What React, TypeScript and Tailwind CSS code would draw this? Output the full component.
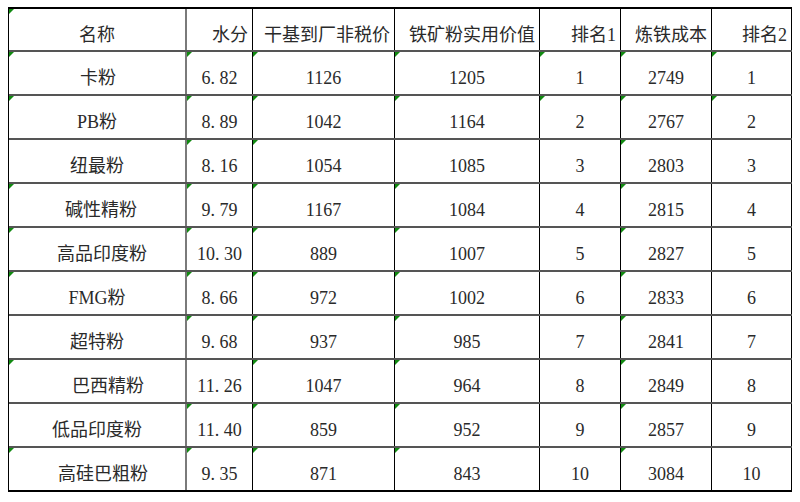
const cols = [
  'w-[178px] border-r-2 border-r-[#7a7a7a]',
  'w-[66px] border-r border-r-black',
  'w-[142px] border-r border-r-black',
  'w-[145px] border-r border-r-black',
  'w-[81px] border-r border-r-black',
  'w-[91px] border-r border-r-black',
  'w-[80px] border-r border-r-black',
];

const headers = ['名称', '水分', '干基到厂非税价', '铁矿粉实用价值', '排名1', '炼铁成本', '排名2'];

// name, offset, moisture, price, value, rank1, cost, rank2
const rows: [string, string, string, string, string, string, string, string][] = [
  ['卡粉', 'pl-[2px]', '6.82', '1126', '1205', '1', '2749', '1'],
  ['PB粉', '', '8.89', '1042', '1164', '2', '2767', '2'],
  ['纽最粉', '', '8.16', '1054', '1085', '3', '2803', '3'],
  ['碱性精粉', 'pl-[8px]', '9.79', '1167', '1084', '4', '2815', '4'],
  ['高品印度粉', 'pl-[10px]', '10.30', '889', '1007', '5', '2827', '5'],
  ['FMG粉', '', '8.66', '972', '1002', '6', '2833', '6'],
  ['超特粉', '', '9.68', '937', '985', '7', '2841', '7'],
  ['巴西精粉', 'pl-[22px]', '11.26', '1047', '964', '8', '2849', '8'],
  ['低品印度粉', '', '11.40', '859', '952', '9', '2857', '9'],
  ['高硅巴粗粉', 'pl-[12px]', '9.35', '871', '843', '10', '3084', '10'],
];

// which data cells carry the green corner mark, per row then column
const marks: number[][] = [
  [1, 1, 1, 1, 1, 1, 1],
  [1, 1, 1, 1, 1, 1, 1],
  [0, 1, 1, 0, 0, 1, 0],
  [1, 1, 1, 1, 0, 1, 0],
  [1, 1, 1, 1, 0, 1, 0],
  [1, 1, 1, 1, 0, 1, 0],
  [0, 1, 1, 1, 0, 1, 0],
  [1, 0, 1, 1, 0, 1, 0],
  [0, 1, 1, 1, 0, 1, 0],
  [1, 1, 1, 1, 0, 1, 0],
];

function Mark() {
  return (
    <span className="absolute left-0 top-0 h-0 w-0 border-t-[5px] border-r-[5px] border-t-[#118a11] border-r-transparent" />
  );
}

function Decimal({ v }: { v: string }) {
  const [a, b] = v.split('.');
  return (
    <span>
      {a}
      <span className="inline-block w-[9px]">.</span>
      {b}
    </span>
  );
}

export default function App() {
  return (
    <div
      className="min-h-screen bg-white text-[#2a2a2a] text-[18px]"
      style={{ fontFamily: '"Liberation Serif", "Noto Sans CJK SC", serif' }}
    >
      <div className="pt-[7px] pl-[8px]">
        <div className="inline-flex flex-col border-t-2 border-l border-black">
          <div className="flex h-[43px] border-b-2 border-b-[#555]">
            {headers.map((h, i) => (
              <div
                key={h}
                className={`${cols[i]} relative flex items-center pt-[11px] ${
                  i === 0 ? 'justify-center' : 'justify-end pr-[4px]'
                }`}
              >
                {i === 0 && <Mark />}
                {h}
              </div>
            ))}
          </div>
          {rows.map((r, ri) => {
            const cells = [r[0], r[2], r[3], r[4], r[5], r[6], r[7]];
            const last = ri === rows.length - 1;
            return (
              <div
                key={r[0]}
                className={`flex h-[44px] border-b-2 ${last ? 'border-b-black' : 'border-b-[#555]'}`}
              >
                {cells.map((c, ci) => (
                  <div
                    key={ci}
                    className={`${cols[ci]} relative flex items-center justify-center pt-[11px] ${
                      ci === 0 ? r[1] : ''
                    }`}
                  >
                    {marks[ri][ci] === 1 && <Mark />}
                    {ci === 1 ? <Decimal v={c} /> : c}
                  </div>
                ))}
              </div>
            );
          })}
        </div>
      </div>
    </div>
  );
}
